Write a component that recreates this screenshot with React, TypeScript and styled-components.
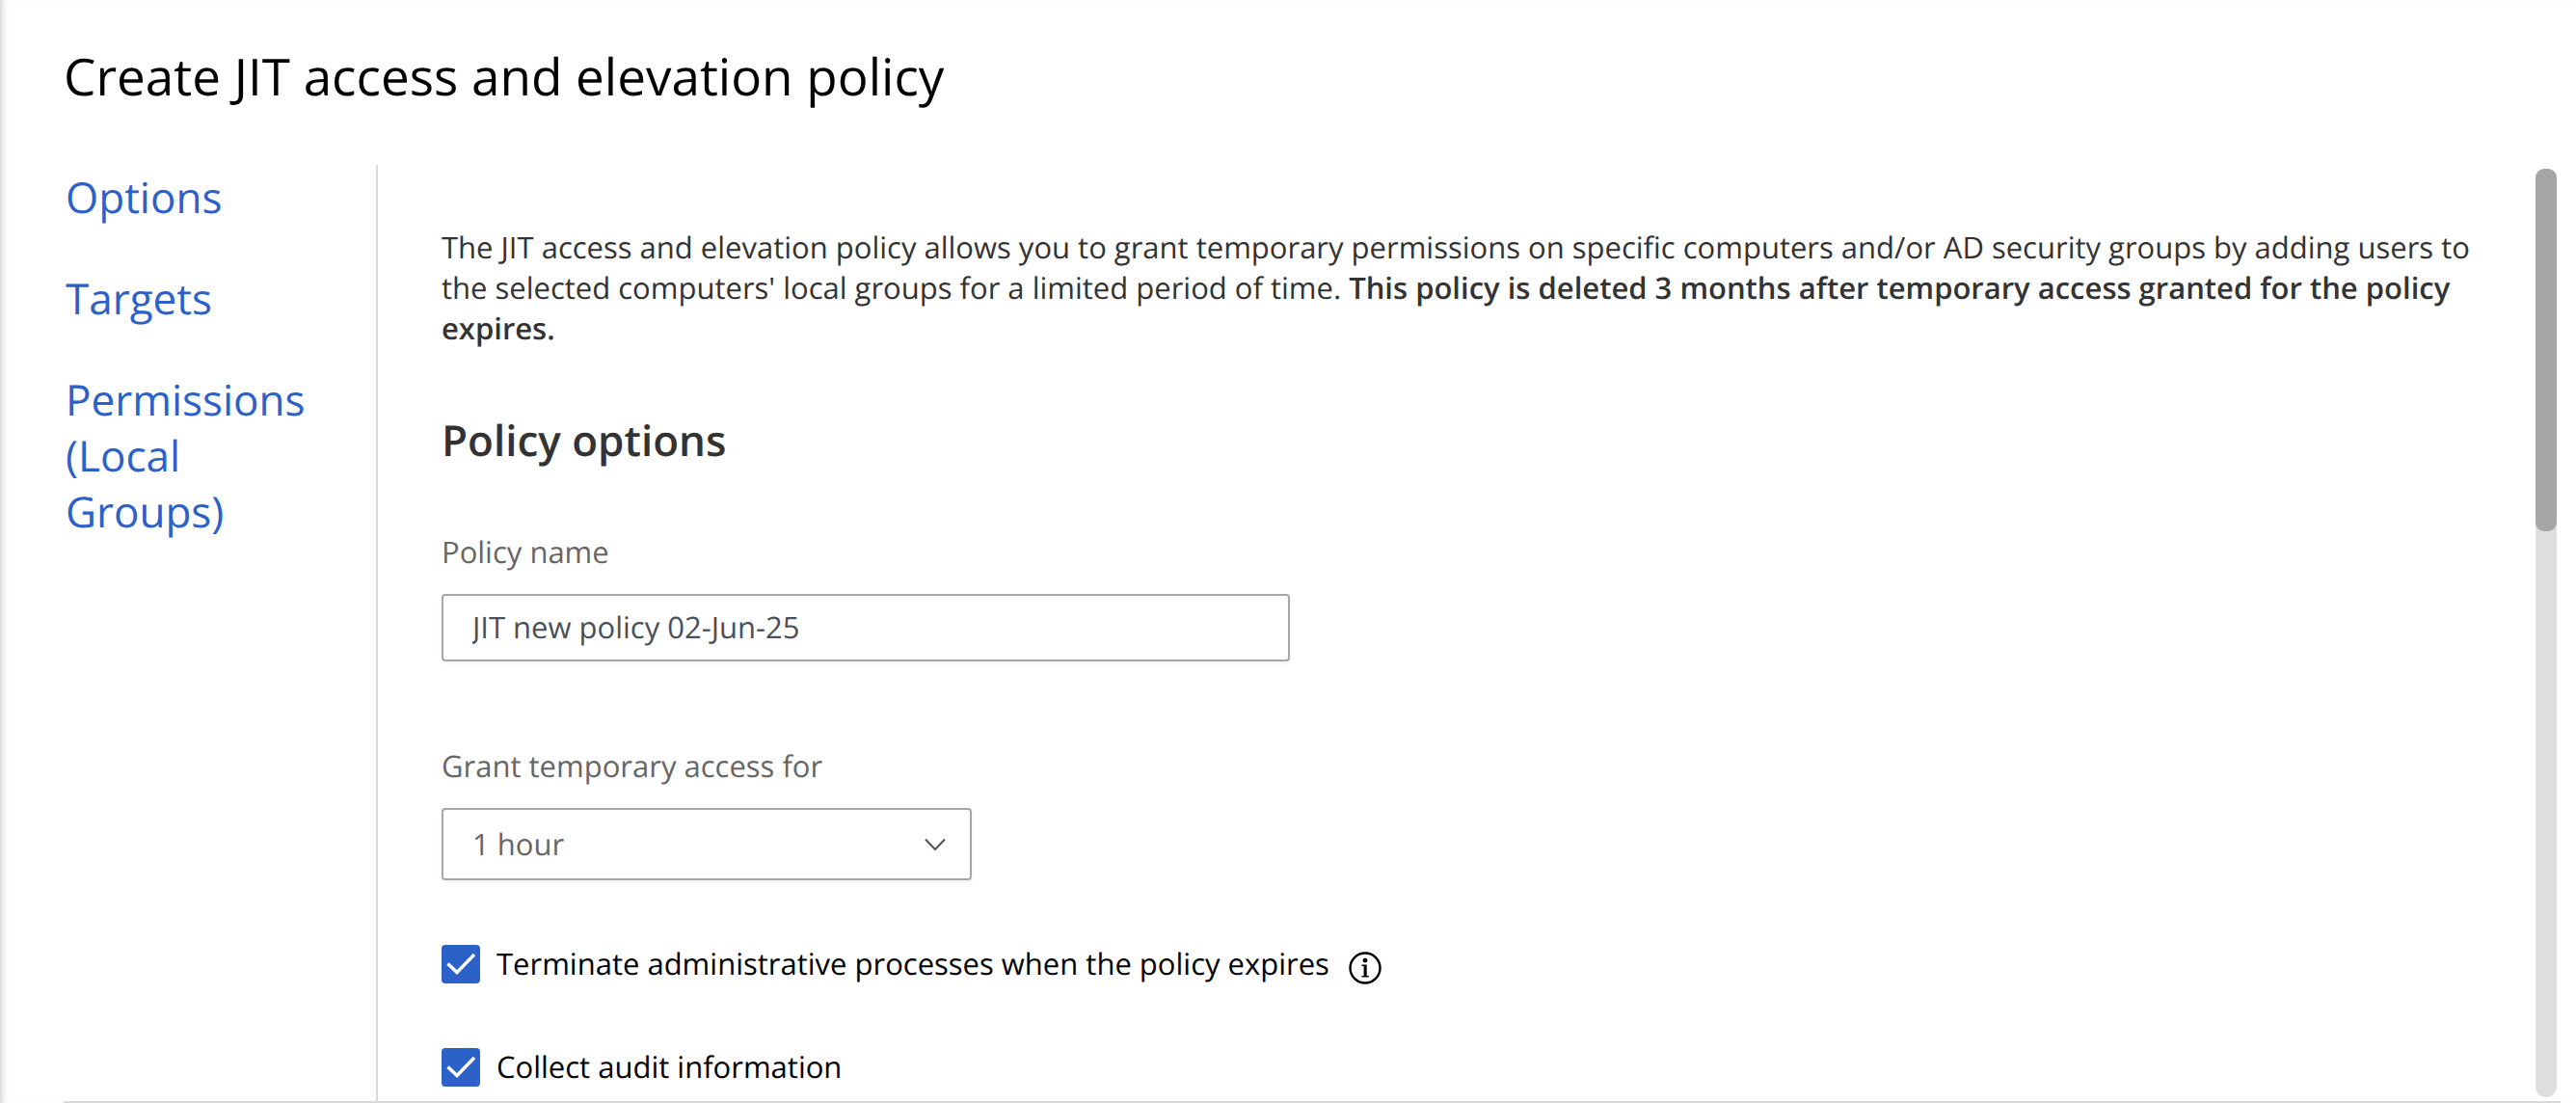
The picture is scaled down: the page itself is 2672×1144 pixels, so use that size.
import React, { useState } from "react";
import styled, { createGlobalStyle } from "styled-components";

const color = {
  link: "#2c61c8",
  accent: "#2c61c8",
  text: "#333333",
  label: "#666666",
  field: "#4a4f59",
  border: "#a6a6a6",
  line: "#d9d9d9",
};

const GlobalStyle = createGlobalStyle`
  *, *::before, *::after { box-sizing: border-box; }
  body {
    margin: 0;
    background: #ffffff;
    color: #000000;
    font-family: "Open Sans", "Noto Sans", sans-serif;
    font-size: 31px;
    line-height: 42px;
    text-rendering: geometricPrecision;
  }
`;

const Dialog = styled.main`
  display: flex;
  flex-direction: column;
  height: 100vh;
  padding: 42px 16px 0 66px;
  overflow: hidden;
  box-shadow: inset 8px 0 8px -7px rgba(0, 0, 0, 0.24);
`;

const Title = styled.h1`
  margin: 0 0 56px;
  font-size: 53px;
  line-height: 73px;
  font-weight: 400;
`;

const Body = styled.div`
  display: flex;
  flex: 1;
  min-height: 0;
  border-bottom: 2px solid ${color.line};
`;

const Steps = styled.nav`
  display: flex;
  flex-direction: column;
  flex: none;
  gap: 47px;
  width: 326px;
  padding: 4px 40px 0 2px;
  border-right: 2px solid ${color.line};
`;

const StepLink = styled.a`
  color: ${color.link};
  font-size: 44px;
  line-height: 58px;
  text-decoration: none;
`;

const Panel = styled.form`
  flex: 1;
  min-width: 0;
  padding: 65px 56px 0 66px;
  overflow-y: auto;
  scrollbar-width: none;
`;

const Intro = styled.p`
  margin: 0 0 64px;
  color: ${color.text};
`;

const Strong = styled.strong`
  font-weight: 600;
`;

const SectionTitle = styled.h2`
  margin: 0 0 66px;
  color: ${color.text};
  font-size: 44px;
  line-height: 60px;
  font-weight: 600;
`;

const Field = styled.div<{ $gap: number }>`
  display: flex;
  flex-direction: column;
  align-items: flex-start;
  gap: 22px;
  margin-bottom: ${(p) => p.$gap}px;
`;

const Label = styled.label`
  color: ${color.label};
`;

const TextInput = styled.input`
  width: 880px;
  max-width: 100%;
  height: 70px;
  padding: 16px 30px;
  border: 2px solid ${color.border};
  border-radius: 4px;
  background: #ffffff;
  box-shadow: 0 2px 4px rgba(0, 0, 0, 0.06);
  color: ${color.field};
  font: inherit;
  line-height: 34px;
  outline: none;
  text-rendering: inherit;
`;

const SelectBox = styled.div`
  display: grid;
  align-items: center;
  width: 550px;
  max-width: 100%;

  & > * {
    grid-area: 1 / 1;
  }
`;

const Select = styled.select`
  appearance: none;
  width: 100%;
  height: 75px;
  padding: 0 64px 0 30px;
  border: 2px solid ${color.border};
  border-radius: 4px;
  background: #ffffff;
  box-shadow: 0 2px 4px rgba(0, 0, 0, 0.06);
  color: ${color.label};
  font: inherit;
  outline: none;
  text-rendering: inherit;
`;

const Chevron = styled.svg`
  justify-self: end;
  margin-right: 26px;
  pointer-events: none;
`;

const CheckRow = styled.div`
  display: flex;
  align-items: center;
  margin-bottom: 65px;
`;

const CheckBox = styled.span`
  display: grid;
  width: 40px;
  height: 40px;
  margin-right: 17px;

  & > * {
    grid-area: 1 / 1;
  }
`;

const CheckInput = styled.input`
  appearance: none;
  width: 40px;
  height: 40px;
  margin: 0;
  border: 2px solid ${color.border};
  border-radius: 4px;
  background: #ffffff;

  &:checked {
    border-color: ${color.accent};
    background: ${color.accent};
  }
`;

const Tick = styled.svg`
  pointer-events: none;
`;

const InfoButton = styled.button`
  display: flex;
  margin: 8px 0 0 20px;
  padding: 0;
  border: 0;
  background: none;
`;

const ScrollTrack = styled.div`
  flex: none;
  width: 22px;
  margin: 4px 4px 4px 0;
  border-radius: 11px;
  background: #dedede;
`;

const ScrollThumb = styled.div`
  height: 39%;
  border-radius: 9px;
  background: ${color.border};
`;

const steps = [
  { id: "options", label: "Options" },
  { id: "targets", label: "Targets" },
  { id: "permissions", label: "Permissions (Local Groups)" },
];

function InfoIcon() {
  return (
    <svg width="34" height="34" viewBox="0 0 34 34" aria-hidden="true">
      <circle cx="17" cy="17" r="15.5" fill="none" stroke="#000" strokeWidth="2.4" />
      <circle cx="17" cy="9.2" r="2.4" />
      <path d="M13.5 13.5h5.2v11.4h2.1v1.6h-7.3v-1.6h2.1v-9.8h-2.1z" />
    </svg>
  );
}

type CheckOptionProps = { id: string; label: string; info?: boolean };

function CheckOption({ id, label, info }: CheckOptionProps) {
  const [checked, setChecked] = useState(true);
  return (
    <CheckRow>
      <CheckBox>
        <CheckInput
          id={id}
          type="checkbox"
          checked={checked}
          onChange={(e) => setChecked(e.target.checked)}
        />
        {checked && (
          <Tick width="40" height="40" viewBox="0 0 40 40" aria-hidden="true">
            <path d="M6.5 19.5L16 28.5L34 10" fill="none" stroke="#fff" strokeWidth="3.4" />
          </Tick>
        )}
      </CheckBox>
      <label htmlFor={id}>{label}</label>
      {info && (
        <InfoButton type="button" aria-label="More information">
          <InfoIcon />
        </InfoButton>
      )}
    </CheckRow>
  );
}

export default function App() {
  const [name, setName] = useState("JIT new policy 02-Jun-25");
  return (
    <>
      <GlobalStyle />
      <Dialog>
        <Title>Create JIT access and elevation policy</Title>
        <Body>
          <Steps>
            {steps.map((s) => (
              <StepLink key={s.id} href={`#${s.id}`}>
                {s.label}
              </StepLink>
            ))}
          </Steps>
          <Panel>
            <Intro>
              The JIT access and elevation policy allows you to grant temporary permissions on
              specific computers and/or AD security groups by adding users to the selected
              computers' local groups for a limited period of time.{" "}
              <Strong>
                This policy is deleted 3 months after temporary access granted for the policy
                expires.
              </Strong>
            </Intro>
            <SectionTitle>Policy options</SectionTitle>
            <Field $gap={88}>
              <Label htmlFor="policy-name">Policy name</Label>
              <TextInput
                id="policy-name"
                type="text"
                value={name}
                onChange={(e) => setName(e.target.value)}
              />
            </Field>
            <Field $gap={66}>
              <Label htmlFor="duration">Grant temporary access for</Label>
              <SelectBox>
                <Select id="duration" defaultValue="1">
                  <option value="1">1 hour</option>
                </Select>
                <Chevron width="24" height="14" viewBox="0 0 24 14" aria-hidden="true">
                  <path d="M2 1.5L12 12L22 1.5" fill="none" stroke="#555" strokeWidth="2" />
                </Chevron>
              </SelectBox>
            </Field>
            <CheckOption
              id="terminate"
              label="Terminate administrative processes when the policy expires"
              info
            />
            <CheckOption id="audit" label="Collect audit information" />
          </Panel>
          <ScrollTrack>
            <ScrollThumb />
          </ScrollTrack>
        </Body>
      </Dialog>
    </>
  );
}
